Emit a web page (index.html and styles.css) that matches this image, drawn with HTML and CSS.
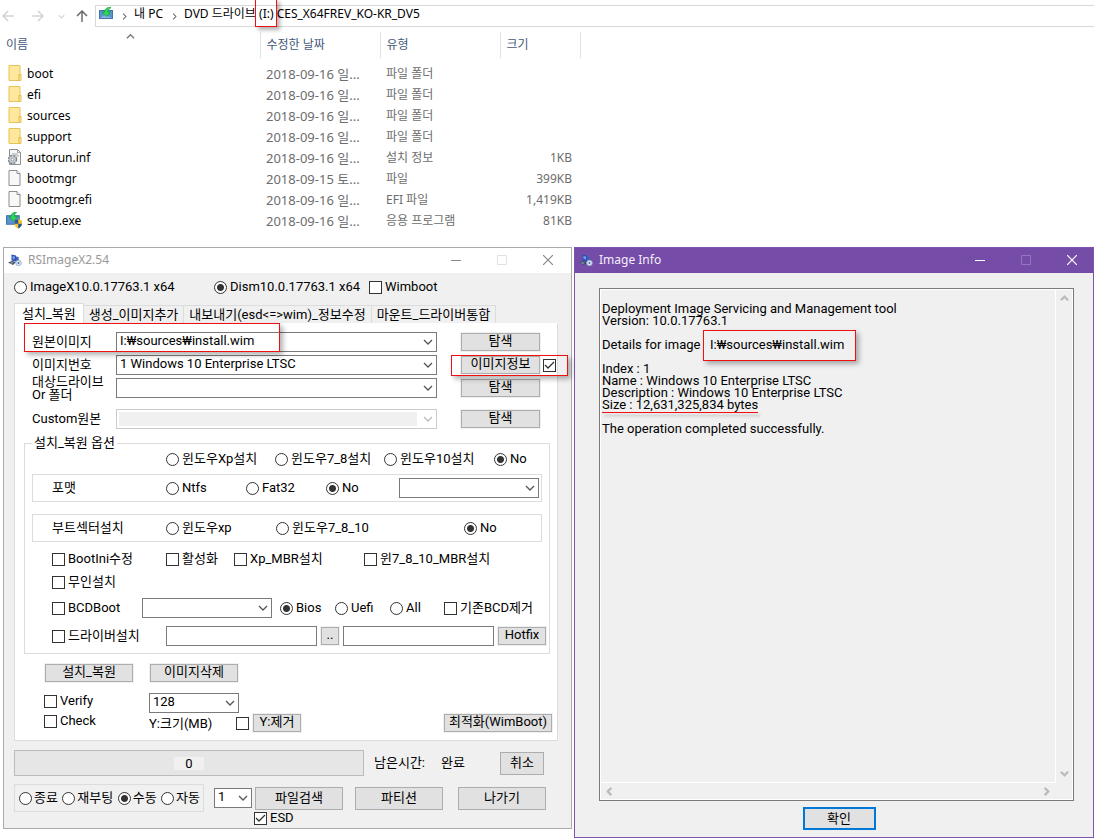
FILE: index.html
```
<!DOCTYPE html>
<html lang="ko">
<head>
<meta charset="utf-8">
<title>RSImageX2.54</title>
<link rel="stylesheet" href="styles.css">
</head>
<body>
<svg class="defs" width="0" height="0" aria-hidden="true">
  <symbol id="i-setup" viewBox="0 0 14 14">
    <rect x="0.500" y="3.500" width="13" height="8" fill="#5b93cf" stroke="#4474ad"/>
    <path d="M1 11l5-3 7 3z" fill="#85b8e8"/>
    <path d="M12 .5C8 0 5.500 2 5.500 5H3l4.500 4.500L12 5H9c0-2 1-3 3-4.500z" fill="#2fd65b" stroke="#129a3c" stroke-width=".7"/>
  </symbol>
  <symbol id="i-setup-shield" viewBox="0 0 16 16">
    <rect x="0.500" y="3.500" width="12" height="8" fill="#5b93cf" stroke="#4474ad"/>
    <path d="M10 .5C6 0 5 2 5 4H3l4 5 4-5H8c0-2 0-2.500 2-3.500z" fill="#2fd65b" stroke="#129a3c" stroke-width=".7"/>
    <path d="M8 8l3.500-1.500L15 8v3c0 2-1.500 3.500-3.500 4.500C9.500 14.500 8 13 8 11z" fill="#f4c326"/>
    <path d="M11.500 6.500V11H8V8zM11.500 11H15c0 2-1.500 3.500-3.500 4.500z" fill="#2456a6"/>
  </symbol>
  <symbol id="i-folder" viewBox="0 0 14 17">
    <path d="M1.500.5h11v8l1 1v6h-12z" fill="#ffe79b" stroke="#e6c35a"/>
    <path d="M11.500 15.500V9.500h2" fill="none" stroke="#e3b93f"/>
  </symbol>
  <symbol id="i-file" viewBox="0 0 14 17">
    <path d="M1.500.5h8l3 3v12h-11z" fill="#f8f8f8" stroke="#8d8d8d"/>
    <path d="M9.500.5v3h3" fill="#fff" stroke="#8d8d8d"/>
  </symbol>
  <symbol id="i-inf" viewBox="0 0 15 17">
    <path d="M2.500.5h8l3 3v12h-11z" fill="#f8f8f8" stroke="#8d8d8d"/>
    <path d="M10.500.5v3h3M5 5h6M8 7h4" fill="none" stroke="#a5a5a5"/>
    <circle cx="5.500" cy="10.500" r="4" fill="#b9bec3" stroke="#7d848b" stroke-width="1.500" stroke-dasharray="2 1.200"/>
    <circle cx="5.500" cy="10.500" r="3" fill="#c9ced2"/>
    <circle cx="5.500" cy="10.500" r="1.300" fill="#fff" stroke="#80878e" stroke-width=".7"/>
  </symbol>
  <symbol id="i-app" viewBox="0 0 14 12">
    <path d="M3.500 0.500l4.500 1v6l-4.500-1z" fill="#2d4fae"/>
    <path d="M4.500 2l2.500.6v3L4.500 5z" fill="#6f9bea"/>
    <path d="M0 8.500l4-1.500 4 1-3 3z" fill="#3c4a63"/>
    <path d="M1 9l3-1 2 .5-2 1.500z" fill="#7f8fa8"/>
    <path d="M8 2.500l2.500.5.500 5H8z" fill="#3c63b6"/>
    <circle cx="10.500" cy="9" r="2.800" fill="#d6e4f2" stroke="#8fa6c5" stroke-width=".7"/>
    <circle cx="10.500" cy="9" r=".9" fill="#45659c"/>
  </symbol>
  <symbol id="i-chev" viewBox="0 0 10 10"><path d="M1 3l4 4 4-4" fill="none" stroke="currentColor" stroke-width="1.500"/></symbol>
  <symbol id="i-bar" viewBox="0 0 10 10"><path d="M1 3l4 4 4-4" fill="none" stroke="currentColor" stroke-width="2.500"/></symbol>
  <symbol id="i-min" viewBox="0 0 10 10"><path d="M0 5.500h10" fill="none" stroke="currentColor"/></symbol>
  <symbol id="i-max" viewBox="0 0 10 10"><path d="M.5.5h9v9h-9z" fill="none" stroke="currentColor"/></symbol>
  <symbol id="i-close" viewBox="0 0 10 10"><path d="M0 0l10 10M10 0L0 10" fill="none" stroke="currentColor" stroke-width="1.200"/></symbol>
  <symbol id="i-back" viewBox="0 0 12 12"><path d="M12 6H1M6 1L1 6l5 5" fill="none" stroke="currentColor" stroke-width="1.500"/></symbol>
</svg>

<header class="explorer">
  <nav class="address-row">
    <button class="nav back" aria-label="뒤로"><svg><use href="#i-back"/></svg></button>
    <button class="nav forward" aria-label="앞으로"><svg><use href="#i-back"/></svg></button>
    <button class="nav recent" aria-label="최근 위치"><svg><use href="#i-chev"/></svg></button>
    <button class="nav up" aria-label="위로"><svg><use href="#i-back"/></svg></button>
    <div class="address">
      <svg class="drive-icon"><use href="#i-setup"/></svg>
      <svg class="crumb-sep"><use href="#i-chev"/></svg>
      <a href="#pc">내 PC</a>
      <svg class="crumb-sep"><use href="#i-chev"/></svg>
      <a href="#dvd">DVD 드라이브 <span class="drive-letter">(I:)</span> CES_X64FREV_KO-KR_DV5</a>
    </div>
  </nav>
  <table class="files">
    <thead>
      <tr><th class="c-name">이름<svg class="sort"><use href="#i-chev"/></svg></th><th class="c-date">수정한 날짜</th><th class="c-type">유형</th><th class="c-size">크기</th><th class="c-rest"></th></tr>
    </thead>
    <tbody>
      <tr><td><span class="name"><svg><use href="#i-folder"/></svg>boot</span></td><td>2018-09-16 일...</td><td class="type">파일 폴더</td><td class="size"></td><td></td></tr>
      <tr><td><span class="name"><svg><use href="#i-folder"/></svg>efi</span></td><td>2018-09-16 일...</td><td class="type">파일 폴더</td><td class="size"></td><td></td></tr>
      <tr><td><span class="name"><svg><use href="#i-folder"/></svg>sources</span></td><td>2018-09-16 일...</td><td class="type">파일 폴더</td><td class="size"></td><td></td></tr>
      <tr><td><span class="name"><svg><use href="#i-folder"/></svg>support</span></td><td>2018-09-16 일...</td><td class="type">파일 폴더</td><td class="size"></td><td></td></tr>
      <tr><td><span class="name"><svg><use href="#i-inf"/></svg>autorun.inf</span></td><td>2018-09-16 일...</td><td class="type">설치 정보</td><td class="size">1KB</td><td></td></tr>
      <tr><td><span class="name"><svg><use href="#i-file"/></svg>bootmgr</span></td><td>2018-09-15 토...</td><td class="type">파일</td><td class="size">399KB</td><td></td></tr>
      <tr><td><span class="name"><svg><use href="#i-file"/></svg>bootmgr.efi</span></td><td>2018-09-16 일...</td><td class="type">EFI 파일</td><td class="size">1,419KB</td><td></td></tr>
      <tr><td><span class="name"><svg><use href="#i-setup-shield"/></svg>setup.exe</span></td><td>2018-09-16 일...</td><td class="type">응용 프로그램</td><td class="size">81KB</td><td></td></tr>
    </tbody>
  </table>
</header>

<main class="windows">
  <section class="window imagex">
    <div class="titlebar">
      <svg class="app-icon"><use href="#i-app"/></svg>
      <span class="title">RSImageX2.54</span>
      <button class="win-btn" aria-label="최소화"><svg><use href="#i-min"/></svg></button>
      <button class="win-btn faint" aria-label="최대화" disabled><svg><use href="#i-max"/></svg></button>
      <button class="win-btn" aria-label="닫기"><svg><use href="#i-close"/></svg></button>
    </div>
    <div class="body">
      <div class="engine-row">
        <label class="opt"><input type="radio" name="engine">ImageX10.0.17763.1 x64</label>
        <label class="opt"><input type="radio" name="engine" checked>Dism10.0.17763.1 x64</label>
        <label class="opt"><input type="checkbox">Wimboot</label>
      </div>
      <div class="tabs" role="tablist">
        <button class="tab active" role="tab">설치_복원</button>
        <button class="tab" role="tab">생성_이미지추가</button>
        <button class="tab" role="tab">내보내기(esd&lt;=&gt;wim)_정보수정</button>
        <button class="tab" role="tab">마운트_드라이버통합</button>
      </div>
      <div class="panel">
        <div class="sources">
          <label for="src">원본이미지</label>
          <select id="src"><option>I:₩sources₩install.wim</option></select>
          <button class="btn">탐색</button>
          <label for="idx">이미지번호</label>
          <select id="idx"><option>1 Windows 10 Enterprise LTSC</option></select>
          <span class="info-cell"><button class="btn">이미지정보</button><input type="checkbox" aria-label="이미지정보 표시" checked><span class="mark mark-info"></span></span>
          <label for="dst" class="two-line">대상드라이브<br>Or 폴더</label>
          <select id="dst"><option></option></select>
          <button class="btn">탐색</button>
          <label for="cus" class="late">Custom원본</label>
          <select id="cus" class="late" disabled><option></option></select>
          <button class="btn late">탐색</button>
          <span class="mark mark-source"></span>
        </div>

        <fieldset class="options">
          <legend>설치_복원 옵션</legend>
          <div class="row os-row">
            <label class="opt"><input type="radio" name="os">윈도우Xp설치</label>
            <label class="opt"><input type="radio" name="os">윈도우7_8설치</label>
            <label class="opt"><input type="radio" name="os">윈도우10설치</label>
            <label class="opt"><input type="radio" name="os" checked>No</label>
          </div>
          <div class="box format-row">
            <span>포맷</span>
            <label class="opt"><input type="radio" name="fmt">Ntfs</label>
            <label class="opt"><input type="radio" name="fmt">Fat32</label>
            <label class="opt"><input type="radio" name="fmt" checked>No</label>
            <select aria-label="포맷 드라이브"><option></option></select>
          </div>
          <div class="box boot-row">
            <span>부트섹터설치</span>
            <label class="opt"><input type="radio" name="bs">윈도우xp</label>
            <label class="opt"><input type="radio" name="bs">윈도우7_8_10</label>
            <label class="opt"><input type="radio" name="bs" checked>No</label>
          </div>
          <div class="row mbr-row">
            <label class="opt"><input type="checkbox">BootIni수정</label>
            <label class="opt"><input type="checkbox">활성화</label>
            <label class="opt"><input type="checkbox">Xp_MBR설치</label>
            <label class="opt"><input type="checkbox">윈7_8_10_MBR설치</label>
          </div>
          <div class="row auto-row">
            <label class="opt"><input type="checkbox">무인설치</label>
          </div>
          <div class="row bcd-row">
            <label class="opt"><input type="checkbox">BCDBoot</label>
            <select aria-label="BCDBoot 드라이브"><option></option></select>
            <label class="opt"><input type="radio" name="fw" checked>Bios</label>
            <label class="opt"><input type="radio" name="fw">Uefi</label>
            <label class="opt"><input type="radio" name="fw">All</label>
            <label class="opt"><input type="checkbox">기존BCD제거</label>
          </div>
          <div class="row driver-row">
            <label class="opt"><input type="checkbox">드라이버설치</label>
            <input type="text" aria-label="드라이버 경로">
            <button class="btn">..</button>
            <input type="text" aria-label="Hotfix 경로">
            <button class="btn">Hotfix</button>
          </div>
        </fieldset>

        <div class="actions">
          <button class="btn">설치_복원</button>
          <button class="btn">이미지삭제</button>
        </div>
        <div class="extras">
          <div class="checks">
            <label class="opt"><input type="checkbox">Verify</label>
            <label class="opt"><input type="checkbox">Check</label>
          </div>
          <div class="ysize">
            <select id="ysize"><option>128</option></select>
            <label for="ysize">Y:크기(MB)</label>
          </div>
          <div class="yremove"><input type="checkbox" aria-label="Y:제거"><button class="btn">Y:제거</button></div>
          <button class="btn optimize">최적화(WimBoot)</button>
        </div>
      </div>

      <div class="status">
        <div class="progress" role="progressbar" aria-valuenow="0"><span>0</span></div>
        <span>남은시간:</span>
        <span>완료</span>
        <button class="btn big">취소</button>
      </div>
      <div class="footer">
        <div class="endmode">
          <label class="opt"><input type="radio" name="end">종료</label>
          <label class="opt"><input type="radio" name="end">재부팅</label>
          <label class="opt"><input type="radio" name="end" checked>수동</label>
          <label class="opt"><input type="radio" name="end">자동</label>
        </div>
        <select aria-label="번호"><option>1</option></select>
        <button class="btn big">파일검색</button>
        <button class="btn big">파티션</button>
        <button class="btn big">나가기</button>
      </div>
      <div class="esd"><label class="opt"><input type="checkbox" checked>ESD</label></div>
    </div>
  </section>

  <section class="window info">
    <div class="titlebar">
      <svg class="app-icon"><use href="#i-app"/></svg>
      <span class="title">Image Info</span>
      <button class="win-btn" aria-label="최소화"><svg><use href="#i-min"/></svg></button>
      <button class="win-btn faint" aria-label="최대화" disabled><svg><use href="#i-max"/></svg></button>
      <button class="win-btn" aria-label="닫기"><svg><use href="#i-close"/></svg></button>
    </div>
    <div class="info-body">
      <div class="memo">
        <textarea readonly aria-label="Image Info" wrap="off">

Deployment Image Servicing and Management tool
Version: 10.0.17763.1

Details for image   I:₩sources₩install.wim

Index : 1
Name : Windows 10 Enterprise LTSC
Description : Windows 10 Enterprise LTSC
Size : 12,631,325,834 bytes

The operation completed successfully.</textarea>
        <div class="vbar"><svg class="up"><use href="#i-bar"/></svg><svg><use href="#i-bar"/></svg></div>
        <div class="hbar"><svg class="left"><use href="#i-bar"/></svg><svg class="right"><use href="#i-bar"/></svg></div>
        <span class="mark mark-path"></span>
        <span class="mark-line"></span>
      </div>
      <button class="ok">확인</button>
    </div>
  </section>
</main>
</body>
</html>
```

FILE: styles.css
```
* { box-sizing: border-box; }

body {
  margin: 0;
  background: #fff;
  color: #000;
  font: 13px/16px Roboto, "Noto Sans CJK KR", sans-serif;
  white-space: nowrap;
}

button, select, input, textarea { font: inherit; color: inherit; margin: 0; }
button { border: 0; padding: 0; background: none; }
svg { display: block; flex: none; }
.defs { position: absolute; }

/* Explorer */
.explorer { font-family: "Noto Sans", "Noto Sans CJK KR", sans-serif; }
.address-row { display: flex; align-items: center; padding-top: 5px; }
.nav { flex: none; color: #d4d4d4; }
.nav svg { width: 12px; height: 12px; }
.nav.back { margin-left: 2px; }
.nav.forward { margin-left: 18px; transform: rotate(180deg); }
.nav.recent { margin-left: 14px; }
.nav.recent svg { width: 7px; height: 7px; }
.nav.up { margin-left: 11px; color: #6b6b6b; transform: rotate(90deg); }
.address {
  flex: 1;
  display: flex;
  align-items: center;
  height: 22px;
  margin-left: 7px;
  padding-left: 3px;
  padding-bottom: 4px;
  border: 1px solid #d9d9d9;
  border-right: 0;
  font-size: 12px;
}
.address a { color: #000; text-decoration: none; }
.drive-icon { width: 14px; height: 14px; }
.crumb-sep { width: 7px; height: 7px; margin: 4px 6px 0 8px; color: #666; transform: rotate(-90deg); }
.drive-letter { position: relative; }
.drive-letter::after {
  content: "";
  position: absolute;
  inset: -6px -3px -5px -4px;
  border: 1px solid #f01010;
  box-shadow: 3px 3px 4px rgba(0, 0, 0, .3);
}

.files { width: 100%; table-layout: fixed; border-collapse: collapse; margin-top: 5px; }
.files th, .files td { padding: 0 8px 0 6px; text-align: left; font-weight: 400; }
.files th { height: 26px; border-right: 1px solid #e2e2e2; color: #44597a; font-size: 12px; position: relative; }
.files th:last-child { border-right: 0; }
.files td { height: 21px; color: #6d6d6d; }
.files tbody::before { content: ""; display: block; height: 5px; }
.c-name { width: 260px; }
.c-date, .c-type { width: 120px; }
.c-size { width: 80px; }
.files .type { font-size: 12px; }
.files .size { text-align: right; font-size: 12px; }
.sort { position: absolute; left: 126px; top: 0; width: 9px; height: 9px; color: #777; transform: rotate(180deg); }
.name { display: flex; align-items: center; gap: 4px; color: #000; font-size: 12px; }
.name svg { width: 17px; height: 17px; }

/* Windows */
.windows {
  display: grid;
  grid-template-columns: 569fr 520fr;
  column-gap: 2px;
  align-items: start;
  padding: 16px 0 0 3px;
}
.window { border: 1px solid #aaa; background: #f0f0f0; }
.titlebar {
  display: flex;
  align-items: center;
  height: 25px;
  padding: 0 18px 2px 4px;
  background: #fff;
  color: #999;
  font: 12px/16px "Noto Sans", "Noto Sans CJK KR", sans-serif;
}
.app-icon { width: 14px; height: 12px; }
.title { flex: 1; margin-left: 6px; }
.win-btn { margin-left: 36px; color: #888; }
.win-btn svg { width: 10px; height: 10px; }
.win-btn.faint { color: #e2e2e2; }
.info { border-color: #7d55ab; }
.info .titlebar { background: #754da8; color: #f4effa; padding-right: 16px; }
.info .win-btn { color: #fff; }
.info .win-btn.faint { color: #9474bd; }

/* Controls */
.opt { display: flex; align-items: center; gap: 3px; }
input[type="radio"], input[type="checkbox"] {
  appearance: none;
  flex: none;
  width: 13px;
  height: 13px;
  border: 1px solid #333;
  background: #fff;
}
input[type="radio"] { border-radius: 50%; }
input[type="radio"]:checked { background: radial-gradient(circle, #333 0 3px, #fff 4px); }
input[type="checkbox"]:checked {
  background: #fff url("data:image/svg+xml,%3Csvg xmlns='http://www.w3.org/2000/svg' viewBox='0 0 11 11'%3E%3Cpath d='M1 5l3 3 6-6' fill='none' stroke='%23333' stroke-width='1.300'/%3E%3C/svg%3E");
}
select, input[type="text"] {
  appearance: none;
  width: 100%;
  min-width: 0;
  height: 20px;
  padding: 0 18px 2px 3px;
  border: 1px solid #7a7a7a;
  border-radius: 0;
  background: #fff;
  line-height: 16px;
}
select {
  background: #fff url("data:image/svg+xml,%3Csvg xmlns='http://www.w3.org/2000/svg' viewBox='0 0 10 10'%3E%3Cpath d='M1 3l4 4 4-4' fill='none' stroke='%23555' stroke-width='1.300'/%3E%3C/svg%3E") no-repeat right 3px center / 10px 10px;
}
select:disabled {
  opacity: 1;
  border-color: #ccc;
  background:
    url("data:image/svg+xml,%3Csvg xmlns='http://www.w3.org/2000/svg' viewBox='0 0 10 10'%3E%3Cpath d='M1 3l4 4 4-4' fill='none' stroke='%23bbb' stroke-width='1.300'/%3E%3C/svg%3E") no-repeat right 3px center / 10px 10px,
    linear-gradient(#fff, #fff) no-repeat right / 19px 100%,
    #f0f0f0;
  box-shadow: inset 0 0 0 2px #fff;
}
.btn {
  height: 18px;
  border: 1px solid #adadad;
  background: #e1e1e1;
  box-shadow: 0 0 0 1px #f0f0f0;
  text-align: center;
  line-height: 14px;
  padding-bottom: 2px;
}
.btn.big { height: 23px; line-height: 19px; }

/* Main window */
.body { padding: 5px 13px 2px 10px; }
.engine-row { display: grid; grid-template-columns: 200px 155px 1fr; height: 18px; }
.tabs { display: flex; align-items: flex-end; margin-top: 7px; }
.tab {
  height: 18px;
  padding: 0 5px;
  border: 1px solid #dcdcdc;
  border-left: 0;
  border-bottom: 0;
  line-height: 16px;
}
.tab.active { height: 20px; padding: 0 7px; border-left: 1px solid #dcdcdc; background: #fff; }
.panel { border: 1px solid #dcdcdc; border-top-color: #fff; background: #fff; padding: 8px 7px 8px 9px; }

.sources {
  position: relative;
  display: grid;
  grid-template-columns: 84px 1fr 79px;
  grid-auto-rows: 20px;
  column-gap: 24px;
  row-gap: 3px;
  align-items: center;
  padding: 0 10px 8px 8px;
}
.sources select { margin-left: -24px; width: calc(100% + 24px); }
.two-line { line-height: 13px; }
.late { margin-top: 16px; }
.info-cell { position: relative; display: flex; align-items: center; gap: 3px; width: 98px; }
.info-cell .btn { flex: 0 0 79px; }

.mark { position: absolute; border: 1px solid #f01010; box-shadow: 3px 3px 5px rgba(0, 0, 0, .3); pointer-events: none; }
.mark-source { left: 0; top: -9px; width: 256px; height: 29px; }
.mark-info { inset: -1px -9px -2px -10px; }

.options { margin: 6px 0 0; padding: 0 7px 7px; border: 1px solid #dcdcdc; min-width: 0; }
.options legend { padding: 0 2px; margin-left: 0; }
.row { display: grid; align-items: center; height: 20px; padding-left: 20px; }
.box { display: grid; align-items: center; height: 28px; padding: 0 2px 0 19px; border: 1px solid #dcdcdc; }
.os-row { grid-template-columns: 109px 109px 110px 1fr; padding-left: 134px; height: 13px; }
.format-row { grid-template-columns: 114px 80px 80px 73px 1fr; margin-top: 10px; }
.boot-row { grid-template-columns: 114px 110px 188px 1fr; margin-top: 12px; }
.mbr-row { grid-template-columns: 114px 68px 130px 1fr; margin-top: 7px; }
.auto-row { margin-top: 3px; }
.bcd-row { grid-template-columns: 90px 138px 55px 55px 54px 1fr; margin-top: 6px; }
.bcd-row select { width: 130px; }
.driver-row { grid-template-columns: 110px 1fr 18px 1fr 48px; column-gap: 4px; margin: 8px -4px 0 0; }

.actions { display: flex; gap: 17px; padding: 10px 0 0 21px; }
.actions .btn { width: 88px; }
.extras { display: grid; grid-template-columns: 105px 87px 1fr 108px; align-items: end; margin-right: -2px; padding: 11px 0 0 20px; }
.checks { display: grid; row-gap: 4px; align-self: start; }
.ysize select { width: 90px; }
.ysize label { display: block; margin-top: 3px; }
.yremove { display: flex; align-items: center; gap: 4px; }
.yremove .btn { width: 48px; }

.status { display: grid; grid-template-columns: 1fr 57px 49px 44px; column-gap: 10px; align-items: center; padding: 9px 14px 0 0; }
.progress { display: grid; place-items: center; height: 26px; border: 1px solid #bcbcbc; background: #e6e6e6; }
.progress span { width: 30px; height: 13px; background: #f0f0f0; text-align: center; line-height: 13px; }
.footer { display: grid; grid-template-columns: 200fr 41fr 100fr 103fr 88fr; align-items: center; padding: 8px 12px 0 0; }
.footer select { width: 38px; }
.footer .btn { width: 88px; }
.endmode { display: flex; align-items: center; justify-content: space-between; width: 190px; height: 28px; padding: 0 3px 0 4px; border: 1px solid #dcdcdc; }
.endmode .opt { gap: 2px; }
.esd { padding-left: 240px; margin-top: -2px; }

/* Info window */
.info-body { display: flex; flex-direction: column; align-items: center; padding: 15px 19px 7px 24px; }
.memo {
  position: relative;
  display: grid;
  grid-template-columns: 1fr 17px;
  grid-template-rows: 494px 17px;
  width: 100%;
  border: 1px solid #7a7a7a;
  box-shadow: inset 0 0 0 1px #fff;
}
.memo textarea {
  width: 100%;
  height: 100%;
  padding: 1px;
  border: 1px solid #fff;
  background: #f0f0f0;
  line-height: 12px;
  resize: none;
  outline: 0;
  overflow: hidden;
}
.vbar, .hbar { display: flex; justify-content: space-between; align-items: center; color: #bbb; }
.vbar { flex-direction: column; padding: 5px 0; }
.hbar { padding: 0 5px; }
.vbar svg, .hbar svg { width: 9px; height: 9px; }
.vbar .up { transform: rotate(180deg); }
.hbar .left { transform: rotate(90deg); }
.hbar .right { transform: rotate(-90deg); }
.mark-path { left: 103px; top: 41px; width: 153px; height: 31px; }
.mark-line { position: absolute; left: 2px; top: 123px; width: 156px; height: 1px; background: #f01010; box-shadow: 2px 3px 3px rgba(0, 0, 0, .3); }
.ok { width: 73px; height: 23px; margin: 6px 0 0 5px; border: 2px solid #0078d7; background: #e1e1e1; line-height: 17px; }
```
